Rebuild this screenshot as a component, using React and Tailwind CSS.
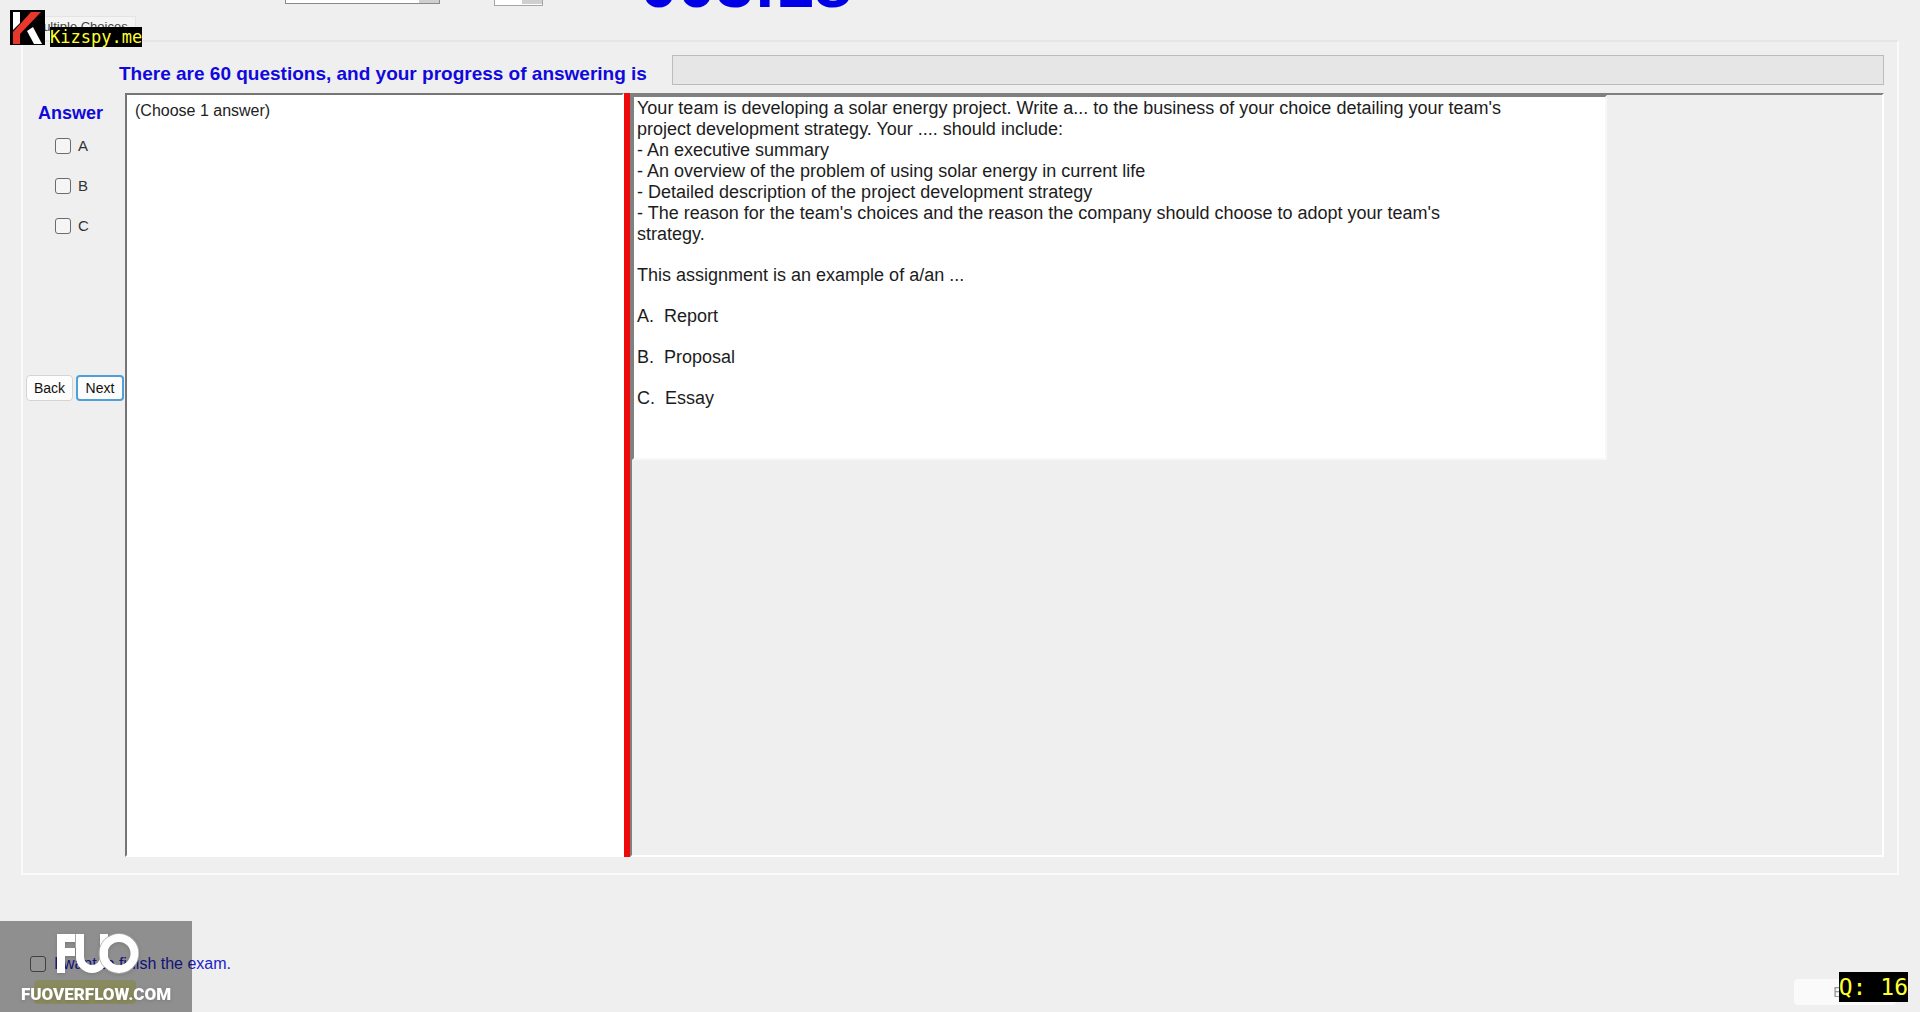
import { useState } from 'react';

const OPTIONS = ['A', 'B', 'C'];

const QUESTION = [
  "Your team is developing a solar energy project. Write a... to the business of your choice detailing your team's\nproject development strategy. Your .... should include:",
  '- An executive summary',
  '- An overview of the problem of using solar energy in current life',
  '- Detailed description of the project development strategy',
  "- The reason for the team's choices and the reason the company should choose to adopt your team's\nstrategy.",
];

const CHOICES = ['A.  Report', 'B.  Proposal', 'C.  Essay'];

const CHECKBOX = 'size-4 shrink-0 appearance-none rounded-[3px] border border-[#6b6b6b] bg-[#f5f5f5] checked:bg-[#0067c0]';

function KizspyBadge() {
  return (
    <div className="absolute left-[10px] top-[10px] z-20 flex items-end gap-[5px]">
      <svg viewBox="0 0 35 35" className="size-[35px]" role="img" aria-label="Kizspy">
        <rect width="35" height="35" fill="#000" />
        <path d="M3 2h7v11l-7 7z" fill="#fff" />
        <path d="M21 2h10L10 24v10H3V22z" fill="#e8372b" />
        <path d="M17 21l6-4 9 17h-8z" fill="#fff" />
      </svg>
      <span className="-mb-[2px] bg-black font-['DejaVu_Sans_Mono',monospace] text-[17px] leading-5 text-[#ffff2e]">
        Kizspy.me
      </span>
    </div>
  );
}

function FuoBadge() {
  return (
    <div className="pointer-events-none absolute bottom-0 left-0 z-10 flex h-[91px] w-48 flex-col items-center bg-black/40 pt-3">
      <svg viewBox="0 0 86 41" className="h-[41px] w-[86px] drop-shadow" role="img" aria-label="FUO">
        <path d="M8 40V5h14M8 19h14" fill="none" stroke="#fff" strokeWidth="8" />
        <path d="M27 1v23a12 12 0 0 0 24 0V1" fill="none" stroke="#fff" strokeWidth="8" />
        <path d="M22.5 1v14" stroke="#a8a8a8" />
        <circle cx="66" cy="20.5" r="20" fill="none" stroke="#a8a8a8" />
        <circle cx="66" cy="20.5" r="15.5" fill="none" stroke="#fff" strokeWidth="8" />
      </svg>
      <span className="mt-2 font-['Roboto','Liberation_Sans',sans-serif] text-[17px] font-black leading-6 text-white drop-shadow">
        FUOVERFLOW.COM
      </span>
    </div>
  );
}

function TopBar() {
  return (
    <header className="flex h-4 shrink-0 items-start pl-[285px]">
      <div className="flex h-1 w-[155px] justify-end border border-t-0 border-[#8a8a8a] bg-white">
        <span className="w-5 bg-[#cfcfcf]" />
      </div>
      <div className="ml-[54px] flex h-[6px] w-[49px] justify-end border border-t-0 border-[#a5a5a5] bg-white">
        <span className="mb-px w-5 bg-[#cfcfcf]" />
      </div>
      <div className="ml-[97px] flex h-[17px] items-end">
        <span className="text-[68px] font-bold leading-[68px] text-[#0000e6]">003:18</span>
      </div>
    </header>
  );
}

function AnswerColumn({ answers, onToggle }) {
  return (
    <div className="flex w-[102px] shrink-0 flex-col">
      <h2 className="mt-2 pl-[15px] text-[18px] font-bold leading-6 text-[#1008dc]">Answer</h2>
      <div className="mt-[5px] flex h-[245px] flex-col pl-8">
        {OPTIONS.map((option) => (
          <label key={option} className="flex h-10 items-center gap-[7px] pb-4 pt-2 text-[15px] text-[#333]">
            <input
              type="checkbox"
              className={CHECKBOX}
              checked={answers.includes(option)}
              onChange={() => onToggle(option)}
            />
            {option}
          </label>
        ))}
      </div>
      <div className="flex gap-[3px] pl-[3px] text-[14px] text-[#111]">
        <button type="button" className="h-[26px] w-[47px] rounded border border-[#d4d4d4] bg-[#fdfdfd]">
          Back
        </button>
        <button type="button" className="h-[26px] w-[48px] rounded border-2 border-[#4f9fd8] bg-[#fdfdfd]">
          Next
        </button>
      </div>
    </div>
  );
}

function QuestionPane() {
  return (
    <div className="min-w-0 flex-1 border-2 border-b-white border-l-[#808080] border-r-white border-t-[#808080]">
      <article className="h-[365px] max-w-[975px] whitespace-pre-wrap border-2 border-b-[#f8f8f8] border-l-[#808080] border-r-[#f8f8f8] border-t-[#808080] bg-white pl-[3px] pt-px text-[18px] leading-[21px] text-[#1c1c1c]">
        {QUESTION.map((line) => (
          <p key={line}>{line}</p>
        ))}
        <p className="mt-5">This assignment is an example of a/an ...</p>
        {CHOICES.map((choice) => (
          <p key={choice} className="mt-5">{choice}</p>
        ))}
      </article>
    </div>
  );
}

export default function App() {
  const [answers, setAnswers] = useState([]);
  const [finished, setFinished] = useState(false);

  function toggleAnswer(option) {
    setAnswers((prev) => (prev.includes(option) ? prev.filter((o) => o !== option) : [...prev, option]));
  }

  return (
    <div className="relative flex h-screen flex-col overflow-hidden bg-[#efefef] font-['Liberation_Sans',Arial,sans-serif]">
      <TopBar />

      {/* Tab strip */}
      <div className="flex h-6 shrink-0 pl-6">
        <button type="button" className="w-[112px] border border-b-0 border-[#e4e4e4] bg-[#f4f4f4] pb-1 text-[13px] text-[#444]">
          Multiple Choices
        </button>
      </div>

      {/* Exam panel */}
      <main className="mx-[21px] flex min-h-0 flex-1 flex-col border-2 border-[#fafafa] border-t-[#e6e6e6] pb-4 pr-[13px]">
        <div className="flex shrink-0 items-center pb-2 pl-24 pt-[13px]">
          <label htmlFor="progress" className="w-[553px] shrink-0 whitespace-nowrap pt-2 text-[19px] font-bold leading-5 text-[#1008dc]">
            There are 60 questions, and your progress of answering is
          </label>
          <div
            id="progress"
            role="progressbar"
            aria-valuenow={0}
            aria-valuemax={60}
            className="h-[30px] flex-1 border border-[#bcbcbc] bg-[#e6e6e6]"
          />
        </div>

        <div className="flex min-h-0 flex-1">
          <AnswerColumn answers={answers} onToggle={toggleAnswer} />
          <section className="w-[499px] shrink-0 border-2 border-b-white border-l-[#757575] border-r-white border-t-[#757575] bg-white px-2 py-[6px] text-[16px] leading-5 text-[#222]">
            (Choose 1 answer)
          </section>
          <div className="w-[6px] shrink-0 bg-[#ee0a0a]" />
          <QuestionPane />
        </div>
      </main>

      {/* Finish row */}
      <footer className="flex h-[137px] shrink-0 items-start justify-between pl-[30px] pr-6 pt-[77px]">
        <div>
          <label className="flex items-center gap-2 text-[16px] text-[#2222c8]">
            <input type="checkbox" className={CHECKBOX} checked={finished} onChange={() => setFinished(!finished)} />
            I want to finish the exam.
          </label>
          <div className="ml-1 mt-1 h-6 w-[102px] rounded-sm bg-[#e6e6a0]" />
        </div>
        <button type="button" disabled className="mt-[27px] h-[26px] w-[102px] rounded bg-[#fafafa] text-[14px] text-[#999]">
          Exit
        </button>
      </footer>

      <KizspyBadge />
      <FuoBadge />
      <div className="absolute bottom-[10px] right-3 z-10 bg-black font-['DejaVu_Sans_Mono',monospace] text-[23px] leading-[30px] text-[#ffff2e]">
        Q: 16
      </div>
    </div>
  );
}
